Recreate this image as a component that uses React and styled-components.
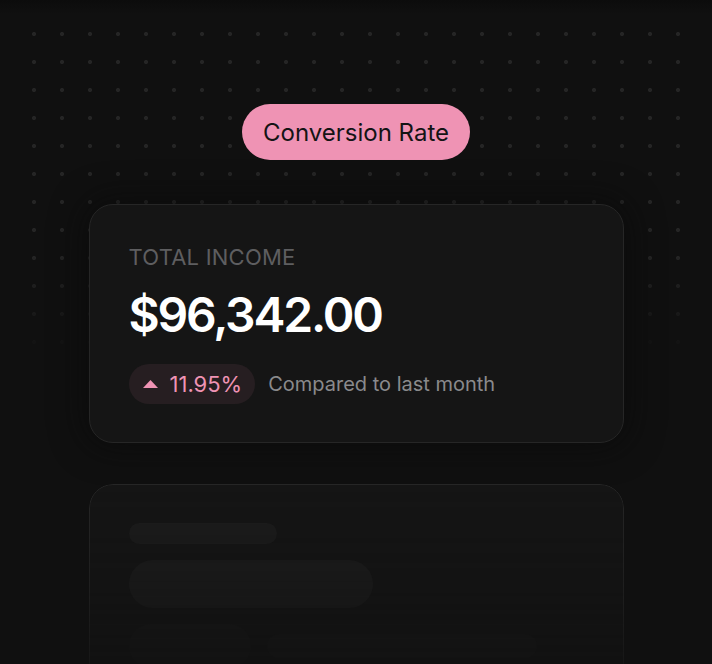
import styled, { createGlobalStyle } from 'styled-components'

const Global = createGlobalStyle`
  html, body {
    margin: 0;
    padding: 0;
    background: #101010;
  }
  body {
    font-family: Inter, "Noto Sans", sans-serif;
    -webkit-font-smoothing: antialiased;
  }
`

const Page = styled.div`
  position: relative;
  height: 664px;
  overflow: hidden;
  background: linear-gradient(#0c0c0c 0px, #101010 14px, #101010 100%);
  display: flex;
  flex-direction: column;
  align-items: center;
  padding-top: 104px;
  box-sizing: border-box;

  & > * {
    flex-shrink: 0;
  }

  /* dot grid, fades out below the first card */
  &::before {
    content: "";
    position: absolute;
    top: 20px;
    left: 20px;
    right: 20px;
    bottom: 0;
    background-image: radial-gradient(circle, #252525 1.7px, transparent 2.4px);
    background-size: 28px 28px;
    background-position: 0 0;
    -webkit-mask-image: linear-gradient(#000 0px, #000 230px, transparent 340px);
    mask-image: linear-gradient(#000 0px, #000 230px, transparent 340px);
    pointer-events: none;
  }
`

const Pill = styled.div`
  position: relative;
  z-index: 1;
  height: 56px;
  padding: 0 21px;
  border-radius: 28px;
  background: #ef93b4;
  color: #141414;
  font-size: 24px;
  font-weight: 400;
  display: flex;
  align-items: center;
  justify-content: center;
`

const Card = styled.div`
  position: relative;
  z-index: 1;
  width: 535px;
  box-sizing: border-box;
  margin-top: ${p => p.$top}px;
  padding: 38px 39px;
  border: 1px solid #262626;
  border-radius: 24px;
  background: #151515;
  box-shadow: 0 0 32px 6px rgba(10, 10, 10, 0.55);
  display: flex;
  flex-direction: column;
  ${p => p.$fade && `
    -webkit-mask-image: linear-gradient(#000 0%, rgba(0,0,0,0.7) 40%, rgba(0,0,0,0.05) 100%);
    mask-image: linear-gradient(#000 0%, rgba(0,0,0,0.7) 40%, rgba(0,0,0,0.05) 100%);
    height: 240px;
  `}
`

const Label = styled.div`
  font-size: 22px;
  line-height: 28px;
  color: #5e5e60;
  letter-spacing: 0.01em;
`

const Amount = styled.div`
  margin-top: 14px;
  font-size: 48px;
  line-height: 60px;
  font-weight: 600;
  color: #ffffff;
  letter-spacing: -0.045em;
`

const Row = styled.div`
  margin-top: 19px;
  display: flex;
  align-items: center;
  gap: 13px;
`

const Badge = styled.div`
  height: 40px;
  padding: 0 13px 0 14px;
  border-radius: 20px;
  background: #261e21;
  color: #ef93b4;
  font-size: 22px;
  display: flex;
  align-items: center;
  gap: 12px;
`

const Note = styled.span`
  font-size: 20px;
  color: #8a8a8c;
`

const Bar = styled.div`
  width: ${p => p.$w}px;
  height: ${p => p.$h}px;
  border-radius: ${p => p.$h / 2}px;
  background: ${p => p.$c || '#1c1c1c'};
  margin-top: ${p => p.$mt || 0}px;
`

const BarRow = styled.div`
  display: flex;
  align-items: flex-start;
  gap: 16px;
  margin-top: 16px;
`

const Up = () => (
  <svg width="15" height="8" viewBox="0 0 15 8">
    <path d="M7.5 0 L15 8 L0 8 Z" fill="#ef93b4" />
  </svg>
)

export default function App() {
  return (
    <>
      <Global />
      <Page>
        <Pill>Conversion Rate</Pill>
        <Card $top={44}>
          <Label>TOTAL INCOME</Label>
          <Amount>$96,342.00</Amount>
          <Row>
            <Badge>
              <Up />
              11.95%
            </Badge>
            <Note>Compared to last month</Note>
          </Row>
        </Card>
        <Card $top={41} $fade>
          <Bar $w={148} $h={21} />
          <Bar $w={244} $h={48} $mt={16} />
          <BarRow>
            <Bar $w={122} $h={44} $c="#181818" />
            <Bar $w={270} $h={24} $mt={10} $c="#181818" />
          </BarRow>
        </Card>
      </Page>
    </>
  )
}
